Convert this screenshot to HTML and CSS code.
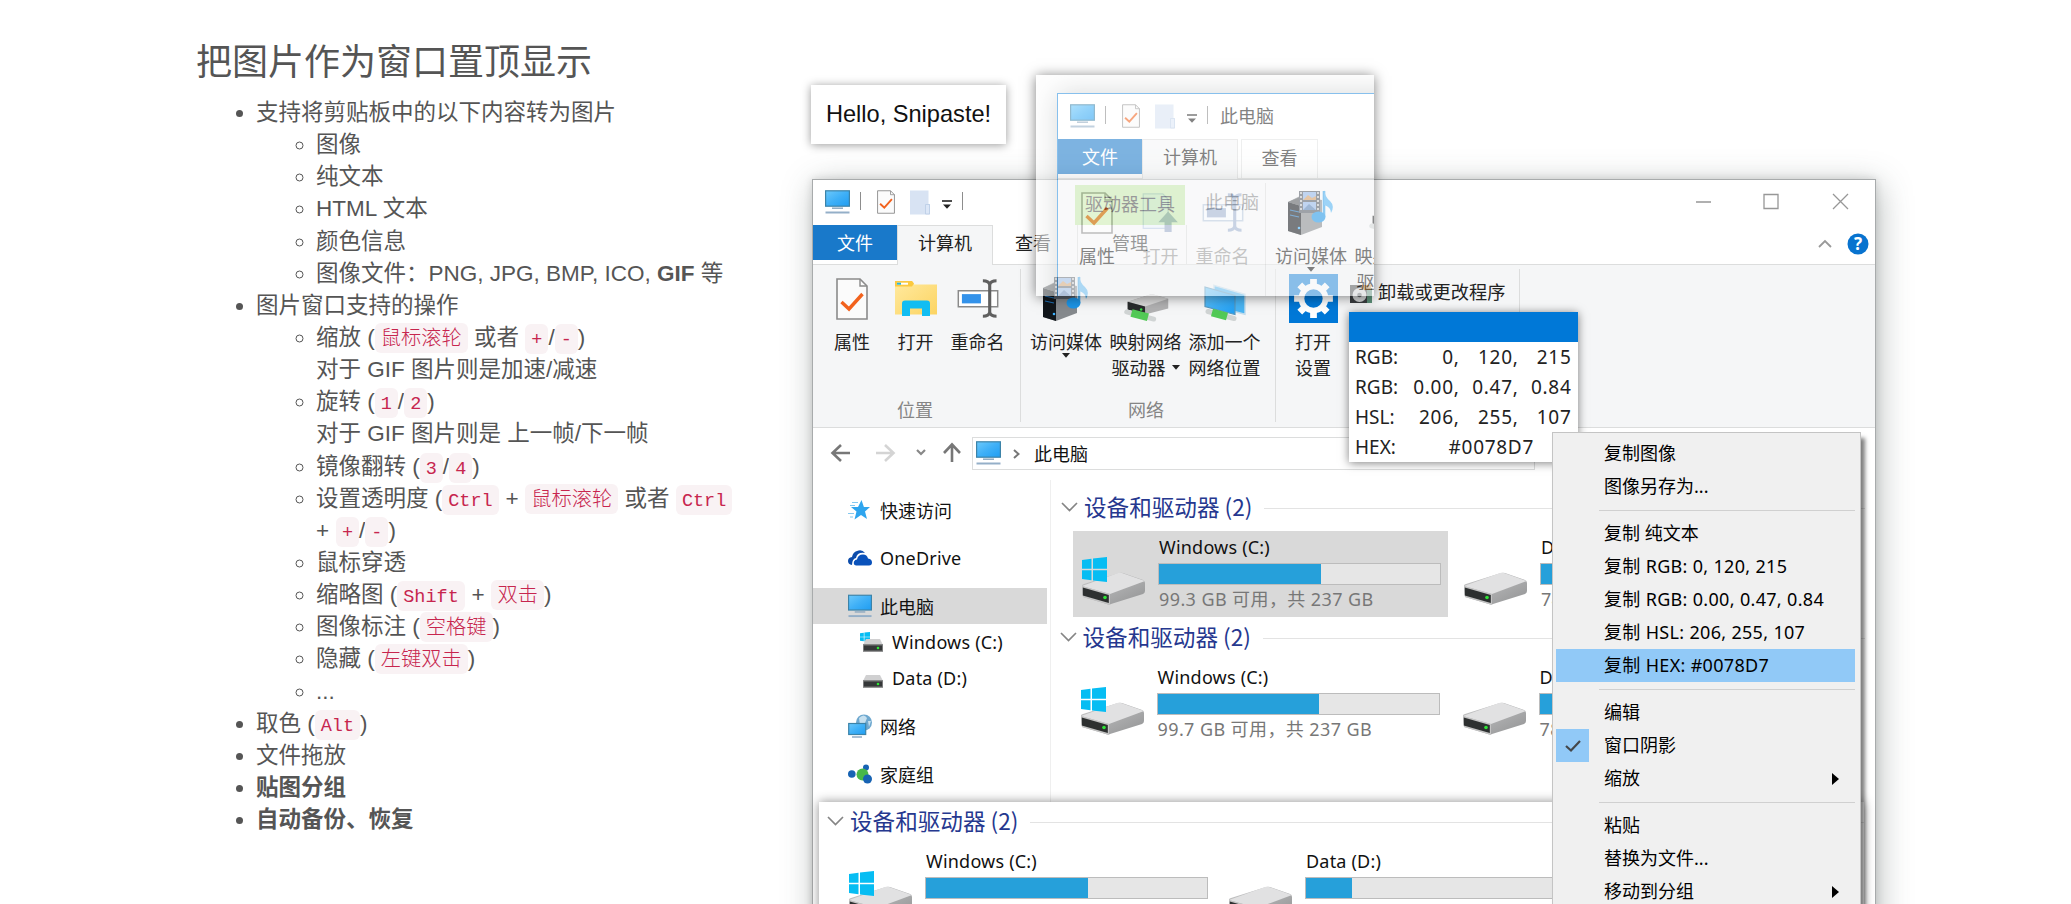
FILE: index.html
```
<!DOCTYPE html>
<html lang="zh-CN">
<head>
<meta charset="utf-8">
<title>Snipaste</title>
<link rel="stylesheet" href="styles.css">
</head>
<body>
<svg class="defs" aria-hidden="true">
  <defs>
    <linearGradient id="screen" x1="0" y1="0" x2="1" y2="1"><stop offset="0" stop-color="#6cc9fb"/><stop offset=".5" stop-color="#3fb0f7"/><stop offset="1" stop-color="#1f9df2"/></linearGradient>
    <linearGradient id="metal" x1="0" y1="0" x2="1" y2="1"><stop offset="0" stop-color="#c9c9ca"/><stop offset="1" stop-color="#929394"/></linearGradient>
    <linearGradient id="fold" x1="0" y1="0" x2="1" y2="1"><stop offset="0" stop-color="#ffeaa0"/><stop offset="1" stop-color="#fcd462"/></linearGradient>
    <symbol id="monitor" viewBox="0 0 25 24"><rect x=".6" y=".8" width="23.8" height="15.4" fill="url(#screen)" stroke="#3c83a8" stroke-width="1.2"/><path d="M7 18.2h11" stroke="#8fa9bf" stroke-width="1.5"/><path d="M.5 22.5h24" stroke="#94afc8" stroke-width="2"/></symbol>
    <symbol id="doc-check" viewBox="0 0 32 42"><path d="M1 1h23l7 7v33H1z" fill="#fbfbfb" stroke="#8b8b8b" stroke-width="1.6"/><path d="M24 1v7h7" fill="none" stroke="#8b8b8b" stroke-width="1.4"/><path d="M5.500 24l7.500 7L26.500 16" fill="none" stroke="#f2621d" stroke-width="3.400"/></symbol>
    <symbol id="doc-blank" viewBox="0 0 20 25"><path d="M0 .5h18.500V14h1.500v10.500H0z" fill="#d8e3f3"/><path d="M15.500 14.500h4v9.500h-4z" fill="#dce7f7" stroke="#b9cbe4" stroke-width=".8"/></symbol>
    <symbol id="tri-line" viewBox="0 0 10 9"><path d="M0 1h10" stroke="currentColor" stroke-width="1.600"/><path d="M1 4.500h8L5 8.800z" fill="currentColor"/></symbol>
    <symbol id="tri" viewBox="0 0 8 5"><path d="M0 0h8L4 4.800z" fill="currentColor"/></symbol>
    <symbol id="folder" viewBox="0 0 42 36"><path d="M0 .5h17l2 3.500h23v30H0z" fill="url(#fold)"/><path d="M0 .5h17l2 2.500-2 3H0z" fill="#fbc93f"/><path d="M2 2.200h11v2H2z" fill="#fff"/><path d="M2 2.200h4v2H2z" fill="#2ab6d8"/><path d="M7 35.500V23q0-3 3-3h22q3 0 3 3v12.500h-8V28H15v7.500z" fill="#12bdf2"/></symbol>
    <symbol id="rename" viewBox="0 0 42 40"><path d="M.8 12h40.400v16.500H.8z" fill="#fff" stroke="#8a8a8a" stroke-width="1.500"/><path d="M4.500 15.500H24v9.500H4.500z" fill="#3392ea"/><path d="M33 3v34M26 1.800q6 0 7 4 1-4 7-4M26 38.200q6 0 7-4 1 4 7 4" fill="none" stroke="#5f5f5f" stroke-width="3.200"/></symbol>
    <symbol id="rename-off" viewBox="0 0 42 40"><path d="M.8 12h40.400v16.500H.8z" fill="#f5f8fc" stroke="#b9c8dd" stroke-width="1.500"/><path d="M4.500 15.500H24v9.500H4.500z" fill="#9fb2d0"/><path d="M33 3v34M26 1.800q6 0 7 4 1-4 7-4M26 38.200q6 0 7-4 1 4 7 4" fill="none" stroke="#9fb2d0" stroke-width="3.200"/></symbol>
    <symbol id="open-off" viewBox="0 0 42 44"><path d="M1 1h22l6 6v33H1z" fill="#eaf1fb" stroke="#bdcde6" stroke-width="1.500"/><path d="M18 33l11-12 11 12h-7v12h-8V33z" fill="#9aabc8"/></symbol>
    <symbol id="server" viewBox="0 0 48 46"><path d="M1 12L13 6l22 4v27L14 45 1 41z" fill="#85898d"/><path d="M1 12l13 4v29L1 41z" fill="#11161b"/><path d="M1 12l12-5 21 4-20 5z" fill="#55595d"/><path d="M3 20l9 2M3 25l9 2" stroke="#2170b5" stroke-width="1.200"/><circle cx="12" cy="38" r="1.300" fill="#3db2ff"/><path d="M12 1h21v22H12z" fill="#535b65"/><path d="M16 2h13v8H16zM16 12h13v8H16z" fill="#8fb4e6"/><path d="M16 10l5-5 4 3 4-2v4z" fill="#d29b63"/><path d="M16 20l6-6 7 6z" fill="#557fb5"/><path d="M14 2v20M31 2v20" stroke="#e6e6e6" stroke-width="1.500" stroke-dasharray="2 2"/><path d="M37 1v26" stroke="#39a2e8" stroke-width="2.600"/><path d="M37 0q1 7 6 11 5 5 1 12 0-6-7-8z" fill="#4fb2f1"/><ellipse cx="31.500" cy="27" rx="7" ry="5.500" fill="#1c94e6"/></symbol>
    <symbol id="net-drive" viewBox="0 0 48 30"><path d="M5 8L30 0l17 5v10L24 21 5 16z" fill="#b1b1b2"/><path d="M5 8L30 0l17 5-24 8z" fill="#dadada"/><path d="M5 8l18 5v8L5 16z" fill="#292b2d"/><circle cx="19" cy="16" r="1.300" fill="#3ce04b"/><path d="M4 18.500l28 7.500" stroke="#d0d4d4" stroke-width="5" stroke-linecap="round"/><path d="M9 19.600l17 4.500" stroke="#52c956" stroke-width="8"/></symbol>
    <symbol id="net-place" viewBox="0 0 42 38"><path d="M10 .8l31 9v20l-31-8z" fill="#49b4f3" stroke="#c1dcec" stroke-width="1.400"/><path d="M1 2.500l30 8.500v19L1 22z" fill="url(#screen)" stroke="#5799c0" stroke-width="1.200"/><path d="M4 27l26 7" stroke="#d0d4d4" stroke-width="5" stroke-linecap="round"/><path d="M8 28l15 4" stroke="#52c956" stroke-width="8"/></symbol>
    <symbol id="gear" viewBox="0 0 48 48"><rect width="48" height="48" fill="#0078d7"/><circle cx="24" cy="24" r="11.800" fill="none" stroke="#fff" stroke-width="5.600"/><g fill="#fff"><g id="tooth2"><path d="M20.700 5h6.600v7h-6.600zM20.700 36h6.600v7h-6.600z"/></g><use href="#tooth2" transform="rotate(45 24 24)"/><use href="#tooth2" transform="rotate(90 24 24)"/><use href="#tooth2" transform="rotate(135 24 24)"/></g></symbol>
    <symbol id="apps" viewBox="0 0 24 24"><path d="M1 5h21v18H1z" fill="#3a3d40"/><path d="M18 8h5v15h-5z" fill="#5b8e77"/><circle cx="10.500" cy="15" r="7" fill="#d3d5d6"/><circle cx="10.500" cy="15" r="2.300" fill="#63676a"/><path d="M13 5h9v5h-9z" fill="#d7a05f"/></symbol>
    <symbol id="drive" viewBox="0 0 64 48"><path d="M0 30q-1-2 2-3l35-11q2-.5 4 0l20 7q2 1 2 3v8q0 2-2 3L29 47q-2 1-4 0L1 40z" fill="url(#metal)"/><path d="M0 29l36-13q2-.5 4 0l23 8-35 13z" fill="#e1e1e2"/><path d="M0 29l28 8v11L1 40z" fill="#c4c4c4"/><path d="M.8 30.500l26 7.500v8l-26-7.500z" fill="#2d3030"/><circle cx="23" cy="40.500" r="1.800" fill="#2fe436"/></symbol>
    <symbol id="win" viewBox="0 0 25 25"><path d="M0 3l9.500-1.300v10H0zM11 1.500L25 0v11.700H11zM0 13.300h9.500v10L0 22zM11 13.300h14V25l-14-1.500z" fill="#06bdf3"/></symbol>
    <symbol id="mini-drive" viewBox="0 0 20 13"><path d="M3 0h14l3 6H0z" fill="#d0d0d1"/><rect y="5.500" width="20" height="7" fill="#343738"/><rect width="19" height="6" x=".5" y="6" fill="none" stroke="#8c8d8d" stroke-width=".8"/><circle cx="15" cy="9" r="1.300" fill="#2fe436"/></symbol>
    <symbol id="star" viewBox="0 0 24 20"><path d="M13.500 0l2.400 7H22l-5 4.500 2 7.500-6-4-6.500 4.500 2-8L3 7h7z" fill="#2fa5ee"/><path d="M4 2.500h6M2 5.500h5M0 13.500h6M2 17h3" stroke="#84c8ef" stroke-width="1.200"/></symbol>
    <symbol id="cloud" viewBox="0 0 24 16"><path d="M4 15q-4-.5-4-4t4-4q1-5 5-6 5-2 8 2-8-1-9 5-4 1-4 7z" fill="#0c4cab"/><path d="M8 15.500q-3-.5-2-4 1-2 3-2 1-5 6-5 4 0 5 4 4 .5 4 4 0 3-3 3z" fill="#0a52bb"/></symbol>
    <symbol id="globe" viewBox="0 0 24 24"><circle cx="16" cy="8.500" r="8" fill="#6ea8cf"/><path d="M11 4q5-5 8 0l-2 5-5 2zM20 7l3 0-2 6z" fill="#c6e0ef"/><rect x=".7" y="9.500" width="17" height="11" fill="url(#screen)" stroke="#3c83a8" stroke-width="1.200"/><path d="M4 23h10" stroke="#94afc8" stroke-width="1.600"/></symbol>
    <symbol id="home" viewBox="0 0 24 19"><circle cx="3.800" cy="9.500" r="3.800" fill="#1763b3"/><circle cx="18" cy="3" r="3" fill="#1763b3"/><circle cx="14.500" cy="10" r="6" fill="#48b84a"/><circle cx="19.500" cy="14.500" r="4.500" fill="#1763b3"/></symbol>
    <symbol id="chev" viewBox="0 0 17 10"><path d="M1 1l7.500 7.500L16 1" fill="none" stroke="#858585" stroke-width="1.700"/></symbol>
    <symbol id="play" viewBox="0 0 7 12"><path d="M0 0l7 6-7 6z" fill="#000"/></symbol>
  </defs>
</svg>

<main class="page">
  <section class="features">
    <h2>把图片作为窗口置顶显示</h2>
    <ul>
      <li>支持将剪贴板中的以下内容转为图片
        <ul>
          <li>图像</li>
          <li>纯文本</li>
          <li>HTML 文本</li>
          <li>颜色信息</li>
          <li>图像文件：PNG, JPG, BMP, ICO, <strong>GIF</strong> 等</li>
        </ul>
      </li>
      <li>图片窗口支持的操作
        <ul>
          <li>缩放 (<code class="han">鼠标滚轮</code> 或者 <code>+</code>/<code>-</code>)<br>对于 GIF 图片则是加速/减速</li>
          <li>旋转 (<code>1</code>/<code>2</code>)<br>对于 GIF 图片则是 上一帧/下一帧</li>
          <li>镜像翻转 (<code>3</code>/<code>4</code>)</li>
          <li>设置透明度 (<code>Ctrl</code> <kbd>+</kbd> <code class="han">鼠标滚轮</code> 或者 <code>Ctrl</code><br><kbd class="first">+</kbd> <code>+</code>/<code>-</code>)</li>
          <li>鼠标穿透</li>
          <li>缩略图 (<code>Shift</code> <kbd>+</kbd> <code class="han">双击</code>)</li>
          <li>图像标注 (<code class="han">空格键</code>)</li>
          <li>隐藏 (<code class="han">左键双击</code>)</li>
          <li>...</li>
        </ul>
      </li>
      <li>取色 (<code>Alt</code>)</li>
      <li>文件拖放</li>
      <li><strong>贴图分组</strong></li>
      <li><strong>自动备份、恢复</strong></li>
    </ul>
  </section>

  <section class="desktop">
    <div class="hello">Hello, Snipaste!</div>

    <div class="win explorer">
      <header class="titlebar">
        <svg class="i-monitor"><use href="#monitor"/></svg><i class="bar"></i>
        <svg class="i-check"><use href="#doc-check"/></svg><svg class="i-blank"><use href="#doc-blank"/></svg>
        <svg class="i-tri"><use href="#tri-line"/></svg><i class="bar"></i>
        <span class="tooltab">驱动器工具</span><span class="caption far">此电脑</span>
        <svg class="controls" viewBox="0 0 154 18"><path d="M0 9h15M68 1.500h14v14H68zM137 1l15 15M152 1l-15 15" fill="none" stroke="#979797" stroke-width="1.300"/></svg>
      </header>
      <nav class="tabs">
        <b class="file">文件</b><b class="active">计算机</b><b class="plain">查看</b><b class="manage">管理</b>
        <svg class="help" viewBox="0 0 52 24"><path d="M2 15l6-6 6 6" fill="none" stroke="#999" stroke-width="1.800"/><circle cx="41" cy="12" r="10.500" fill="#0873cf"/><text x="41" y="18" text-anchor="middle">?</text></svg>
      </nav>
      <div class="ribbon">
        <div class="group g1">
          <div class="tools">
            <span class="tool w64"><span class="ico"><svg class="s32"><use href="#doc-check"/></svg></span>属性</span>
            <span class="tool w63"><span class="ico"><svg class="s42"><use href="#folder"/></svg></span>打开</span>
            <span class="tool w61"><span class="ico"><svg class="s42"><use href="#rename"/></svg></span>重命名</span>
          </div>
          <em>位置</em>
        </div>
        <div class="group g2">
          <div class="tools">
            <span class="tool w80"><span class="ico"><svg class="s48"><use href="#server"/></svg></span>访问媒体<svg class="tri"><use href="#tri"/></svg></span>
            <span class="tool w79"><span class="ico low"><svg class="s48 short"><use href="#net-drive"/></svg></span>映射网络<span class="row2">驱动器<svg class="tri side"><use href="#tri"/></svg></span></span>
            <span class="tool w79"><span class="ico low"><svg class="s42"><use href="#net-place"/></svg></span>添加一个<span class="row2">网络位置</span></span>
          </div>
          <em class="wide">网络</em>
        </div>
        <div class="group g3">
          <div class="tools">
            <span class="tool w60"><span class="ico"><svg class="s49"><use href="#gear"/></svg></span>打开<span class="row2">设置</span></span>
            <span class="uninstall"><svg><use href="#apps"/></svg>卸载或更改程序</span>
          </div>
        </div>
      </div>
      <div class="nav">
        <svg class="arrows" viewBox="0 0 130 24"><g fill="none" stroke-width="2.600"><path d="M19 12H2M10 4l-8.500 8 8.500 8" stroke="#777"/><path d="M45 12h17M54 4l8.500 8-8.500 8" stroke="#d4d4d4"/><path d="M86 9l4 4 4-4" stroke="#888" stroke-width="2.200"/><path d="M121 21V4M113 12l8-8.500 8 8.500" stroke="#777"/></g></svg>
        <div class="address"><svg class="i-monitor"><use href="#monitor"/></svg><svg class="crumb" viewBox="0 0 7 10"><path d="M1 1l4.500 4L1 9" fill="none" stroke="#777" stroke-width="2"/></svg>此电脑</div>
      </div>
      <div class="body">
        <aside>
          <a><svg class="i-side"><use href="#star"/></svg>快速访问</a>
          <a class="gap"><svg class="i-side"><use href="#cloud"/></svg><span class="lat">OneDrive</span></a>
          <a class="gap sel"><svg class="i-side"><use href="#monitor"/></svg>此电脑</a>
          <a class="child"><span class="mini"><svg class="m-win"><use href="#win"/></svg><svg class="m-drive"><use href="#mini-drive"/></svg></span><span class="lat">Windows (C:)</span></a>
          <a class="child"><span class="mini"><svg class="m-drive"><use href="#mini-drive"/></svg></span><span class="lat">Data (D:)</span></a>
          <a class="gap"><svg class="i-side"><use href="#globe"/></svg>网络</a>
          <a class="gap"><svg class="i-side"><use href="#home"/></svg>家庭组</a>
        </aside>
        <div class="content">
          <div class="head"><svg class="chev"><use href="#chev"/></svg>设备和驱动器 (2)<hr></div>
          <div class="disks">
            <div class="disk picked"><span class="pic"><svg class="logo"><use href="#win"/></svg><svg class="drv"><use href="#drive"/></svg></span><div class="info"><span class="lat">Windows (C:)</span><div class="meter"><i style="width:57.5%"></i></div><small>99.3 GB 可用，共 237 GB</small></div></div>
            <div class="disk"><span class="pic"><svg class="drv"><use href="#drive"/></svg></span><div class="info"><span class="lat">Data (D:)</span><div class="meter"><i style="width:16.5%"></i></div><small>74.2 GB 可用，共 931 GB</small></div></div>
          </div>
          <div class="shift">
            <div class="head"><svg class="chev"><use href="#chev"/></svg>设备和驱动器 (2)<hr></div>
            <div class="disks">
              <div class="disk"><span class="pic"><svg class="logo"><use href="#win"/></svg><svg class="drv"><use href="#drive"/></svg></span><div class="info"><span class="lat">Windows (C:)</span><div class="meter"><i style="width:57.5%"></i></div><small>99.7 GB 可用，共 237 GB</small></div></div>
              <div class="disk"><span class="pic"><svg class="drv"><use href="#drive"/></svg></span><div class="info"><span class="lat">Data (D:)</span><div class="meter"><i style="width:16.5%"></i></div><small>78.2 GB 可用，共 931 GB</small></div></div>
            </div>
          </div>
        </div>
      </div>
    </div>

    <div class="strip">
      <div class="head"><svg class="chev"><use href="#chev"/></svg>设备和驱动器 (2)<hr></div>
      <div class="disks">
        <div class="disk"><span class="pic"><svg class="logo"><use href="#win"/></svg><svg class="drv"><use href="#drive"/></svg></span><div class="info"><span class="lat">Windows (C:)</span><div class="meter"><i style="width:57.5%"></i></div><small>99.7 GB 可用，共 237 GB</small></div></div>
        <div class="disk"><span class="pic"><svg class="drv"><use href="#drive"/></svg></span><div class="info"><span class="lat">Data (D:)</span><div class="meter"><i style="width:16.5%"></i></div><small>78.2 GB 可用，共 931 GB</small></div></div>
      </div>
    </div>

    <div class="ghost">
      <div class="ghost-body">
        <div class="win clone">
          <header class="titlebar">
            <svg class="i-monitor"><use href="#monitor"/></svg><i class="bar"></i>
            <svg class="i-check"><use href="#doc-check"/></svg><svg class="i-blank"><use href="#doc-blank"/></svg>
            <svg class="i-tri"><use href="#tri-line"/></svg><i class="bar"></i>
            <span class="caption">此电脑</span>
          </header>
          <nav class="tabs"><b class="file">文件</b><b class="active">计算机</b><b class="boxed">查看</b></nav>
          <div class="ribbon">
            <div class="group g1">
              <div class="tools">
                <span class="tool w64"><span class="ico"><svg class="s32"><use href="#doc-check"/></svg></span>属性</span>
                <span class="tool w63 off"><span class="ico"><svg class="s42"><use href="#open-off"/></svg></span>打开</span>
                <span class="tool w61 off"><span class="ico"><svg class="s42"><use href="#rename-off"/></svg></span>重命名</span>
              </div>
            </div>
            <div class="group g2">
              <div class="tools">
                <span class="tool w80"><span class="ico"><svg class="s48"><use href="#server"/></svg></span>访问媒体<svg class="tri"><use href="#tri"/></svg></span>
                <span class="tool w79"><span class="ico low"><svg class="s48 short"><use href="#net-drive"/></svg></span>映射网络<span class="row2">驱动器<svg class="tri side"><use href="#tri"/></svg></span></span>
              </div>
            </div>
          </div>
        </div>
      </div>
    </div>

    <div class="picker">
      <div class="swatch"></div>
      <div class="vals"><span>RGB:</span><span>0,</span><span>120,</span><span>215</span></div>
      <div class="vals"><span>RGB:</span><span>0.00,</span><span>0.47,</span><span>0.84</span></div>
      <div class="vals"><span>HSL:</span><span>206,</span><span>255,</span><span>107</span></div>
      <div class="vals hex"><span>HEX:</span><span>#0078D7</span></div>
    </div>

    <div class="menu">
      <div class="item">复制图像</div>
      <div class="item">图像另存为...</div>
      <hr>
      <div class="item">复制 纯文本</div>
      <div class="item num">复制 RGB: 0, 120, 215</div>
      <div class="item num">复制 RGB: 0.00, 0.47, 0.84</div>
      <div class="item num">复制 HSL: 206, 255, 107</div>
      <div class="item num hot">复制 HEX: #0078D7</div>
      <hr>
      <div class="item">编辑</div>
      <div class="item checked"><span class="tick"><svg viewBox="0 0 16 12"><path d="M1 6l5 4.500L15 1" fill="none" stroke="#44474a" stroke-width="2.200"/></svg></span>窗口阴影</div>
      <div class="item">缩放<svg class="play"><use href="#play"/></svg></div>
      <hr>
      <div class="item">粘贴</div>
      <div class="item">替换为文件...</div>
      <div class="item">移动到分组<svg class="play"><use href="#play"/></svg></div>
    </div>
  </section>
</main>
</body>
</html>
```
FILE: styles.css
```
* { box-sizing: border-box; }
body { margin: 0; background: #fff; overflow: hidden; }
.defs { position: absolute; width: 0; height: 0; }
svg { display: block; flex: none; overflow: visible; }
.page { position: relative; width: 2071px; height: 904px; overflow: hidden; }

/* feature list */
.features {
  width: 560px; margin-left: 196px; padding-top: 43px; color: #555;
  font: 22.5px/32.14px "Liberation Sans", "Noto Sans CJK SC", sans-serif;
  white-space: nowrap;
}
.features h2 { margin: 0 0 14px; font-size: 36px; line-height: 40px; font-weight: 400; }
.features ul { margin: 0; padding-left: 60px; }
.features code {
  padding: 6px 6px 3px; border-radius: 6px;
  font: 18.5px/20px "Liberation Mono", "Noto Sans CJK SC", monospace;
  background: #f9f2f4; color: #c7254e;
}
.features code.han { padding: 5px 6px 2px; font-size: 20.25px; font-weight: 300; }
.features kbd { font: inherit; margin: 0 .5px; }
.features kbd.first { margin-left: 0; }

/* shared window chrome */
.desktop { font: 18px/26px "Noto Sans", "Noto Sans CJK SC", sans-serif; color: #222; white-space: nowrap; }
.win { position: absolute; background: #fff; border: 1px solid #a8abac; font-family: "Noto Sans CJK SC", sans-serif; }
.lat { font-family: "Noto Sans", sans-serif; letter-spacing: .2px; }
.titlebar { display: flex; height: 45px; padding: 10px 0 0 12px; align-items: flex-start; color: #222; }
.i-monitor { width: 25px; height: 24px; }
.titlebar .bar { width: 1px; height: 18px; background: #8d8d8d; margin: 2px 0 0 10px; }
.i-check { width: 18px; height: 24px; margin-left: 16px; }
.i-blank { width: 20px; height: 25px; margin-left: 15px; }
.i-tri { width: 10px; height: 9px; margin: 10px 0 0 12px; }
.caption { margin-left: 12px; line-height: 23px; }
.tooltab { margin: -5px 0 0 112px; width: 110px; height: 40px; background: #c2ec9f; text-align: center; line-height: 36px; }
.caption.far { margin-left: 20px; color: #777; }
.controls { width: 154px; height: 18px; margin: 3px 25px 0 auto; }
.tabs { display: flex; height: 40px; border-bottom: 1px solid #dcdddd; }
.tabs b { font-weight: 400; line-height: 34px; text-align: center; }
.tabs .file { width: 84px; height: 35px; background: #1979ca; color: #fff; }
.tabs .active { width: 96px; height: 40px; border: 1px solid #dcdddd; border-bottom: 0; background: #f5f6f7; line-height: 33px; }
.tabs .plain { width: 80px; margin-right: 4px; }
.tabs .manage { width: 110px; border: 1px solid #dcdddd; border-width: 0 1px; padding-right: 4px; }
.tabs .boxed { width: 77px; margin-left: 3px; border: 1px solid #e2e3e3; border-bottom: 0; }
.help { width: 52px; height: 24px; margin: 7px 6px 0 auto; }
.help text { font: bold 17px "Noto Sans", sans-serif; fill: #fff; }
.ribbon { display: flex; height: 163px; background: #f5f6f7; border-bottom: 1px solid #dcdddd; padding-top: 4px; }
.group { display: flex; flex-direction: column; height: 153px; border-right: 1px solid #dcdddd; }
.g1 { width: 208px; padding-left: 7px; }
.g2 { width: 255px; padding-left: 5px; }
.g3 { width: 244px; padding-left: 7px; }
.tools { display: flex; height: 127px; }
.group em { font-style: normal; color: #858585; text-align: center; width: 190px; }
.group em.wide { width: 240px; }
.tool { display: flex; flex-direction: column; align-items: center; flex: none; }
.ico { display: flex; height: 59px; align-items: center; }
.ico.low { align-items: flex-end; padding-bottom: 5px; }
.row2 { display: flex; align-items: center; }
.off { color: #999; }
.w60 { width: 60px; } .w61 { width: 61px; } .w63 { width: 63px; } .w64 { width: 64px; } .w79 { width: 79px; } .w80 { width: 80px; }
.s32 { width: 32px; height: 42px; }
.s42 { width: 42px; height: 39px; }
.s48 { width: 48px; height: 46px; }
.s49 { width: 49px; height: 49px; }
.s48.short { height: 29px; }
.tri { width: 8px; height: 5px; margin-top: -1px; }
.tri.side { margin: 0 0 0 6px; }
.uninstall { display: flex; align-items: flex-start; margin-left: 6px; padding-top: 9px; height: 40px; font-size: 18.2px; line-height: 26px; }
.uninstall svg { width: 24px; height: 24px; margin: 2px 5px 0 0; }

/* explorer window */
.explorer { left: 812px; top: 179px; width: 1064px; height: 780px; box-shadow: 3px 6px 30px rgba(60, 75, 72, .36), 0 0 8px rgba(0, 0, 0, .14); }
.nav { display: flex; height: 52px; padding: 9px 0 0 18px; }
.arrows { width: 130px; height: 24px; margin-top: 4px; }
.address { display: flex; align-items: center; width: 563px; height: 33px; margin-left: 11px; border: 1px solid #dcdddd; padding: 0 0 2px 3px; color: #111; }
.crumb { width: 7px; height: 10px; margin: 2px 14px 0 12px; }
.body { display: flex; height: 440px; }
aside { width: 238px; padding-top: 12px; border-right: 1px solid #efefef; color: #111; }
aside a { display: flex; align-items: center; height: 36px; width: 234px; padding: 0 0 1px 35px; }
aside .gap { margin-top: 12px; }
aside .sel { background: #d9d9d9; }
aside .child { padding-left: 47px; }
.i-side { width: 24px; height: 24px; margin-right: 8px; }
.mini { display: flex; flex-direction: column; justify-content: flex-end; width: 23px; height: 20px; margin-right: 9px; padding-left: 3px; }
.m-win { width: 10px; height: 10px; margin: 0 0 -3px -3px; }
.m-drive { width: 20px; height: 13px; }
.content { flex: 1; padding: 12px 10px 0 10px; }
.head { display: flex; align-items: center; height: 32px; padding-bottom: 2px; color: #26388f; font: 22.6px/30px "Noto Sans CJK SC", sans-serif; }
.chev { width: 17px; height: 10px; margin-right: 6px; }
.head hr { flex: 1; border: 0; height: 1px; background: #e3e3e3; margin: 2px 0 0 12px; }
.disks { display: flex; gap: 7px; padding: 7px 0 0 12px; }
.disk { display: flex; flex: none; width: 375px; height: 86px; padding: 3px 0 0 9px; }
.picked { background: #d9d9d9; }
.pic { display: flex; flex-direction: column; width: 64px; height: 71px; justify-content: flex-end; margin-right: 12px; }
.logo { width: 25px; height: 25px; margin-bottom: -25px; z-index: 1; }
.drv { width: 64px; height: 48px; }
.info { width: 283px; display: flex; flex-direction: column; color: #111; }
.info .lat { line-height: 27px; height: 29px; padding-left: 1px; }
.meter { height: 22px; border: 1px solid #bcbcbc; background: #e6e6e6; flex: none; }
.meter i { display: block; height: 100%; background: #26a0da; }
.info small { font: 18px/28px "Noto Sans", "Noto Sans CJK SC", sans-serif; color: #777; padding-left: 1px; letter-spacing: .4px; }
.shift { margin: 5px 0 0 -1.500px; }

/* pinned snippets */
.hello { position: absolute; left: 811px; top: 85px; width: 195px; height: 59px; background: #fff; box-shadow: 0 1px 9px rgba(0, 0, 0, .4); font: 23.6px/59px "Liberation Sans", sans-serif; color: #111; text-align: center; }
.strip { position: absolute; left: 819px; top: 802px; width: 1045px; height: 140px; padding: 4px 0 0 8px; background: #fff; box-shadow: 0 0 10px rgba(0, 0, 0, .45); }
.strip .disks { padding-left: 13px; gap: 5px; }
.ghost { position: absolute; left: 1036px; top: 75px; width: 338px; height: 221px; box-shadow: 0 1px 12px rgba(0, 0, 0, .5); }
.ghost-body { position: relative; width: 100%; height: 100%; overflow: hidden; opacity: .56; background: #fff; }
.clone { left: 21px; top: 18px; width: 1064px; height: 500px; border-color: #2a8fe0; box-shadow: 0 0 26px rgba(60, 70, 70, .35); }

/* colour picker */
.picker { position: absolute; left: 1349px; top: 312px; width: 229px; height: 150px; background: #fff; box-shadow: 0 1px 9px rgba(0, 0, 0, .5); font: 19px/30px "Noto Sans", sans-serif; color: #222; }
.swatch { height: 30px; background: #0078d7; }
.vals { display: grid; grid-template-columns: 46px 58.5px 59px 53px; padding-left: 6px; height: 30px; text-align: right; letter-spacing: .7px; }
.vals span:first-child { text-align: left; letter-spacing: 0; }
.vals.hex { grid-template-columns: 46px 133px; }

/* context menu */
.menu { position: absolute; left: 1552px; top: 432px; width: 309px; height: 520px; padding: 4px 5px 0 3px; background: #f0f0f0; border: 1px solid #c4c4c4; box-shadow: 4px 6px 4px rgba(0, 0, 0, .5); color: #000; }
.item { display: flex; align-items: center; height: 33px; padding-left: 48px; line-height: 33px; font-size: 18px; }
.item.num { letter-spacing: .32px; }
.item.hot { background: #91c9f7; }
.item.checked { padding-left: 0; }
.tick { display: flex; align-items: center; justify-content: center; width: 33px; height: 33px; margin-right: 15px; background: #91c9f7; }
.tick svg { width: 16px; height: 12px; }
.play { width: 7px; height: 12px; margin: 0 16px 0 auto; }
.menu hr { border: 0; height: 1px; margin: 6.500px 0 6.500px 43px; background: #d0d0d0; }
```
